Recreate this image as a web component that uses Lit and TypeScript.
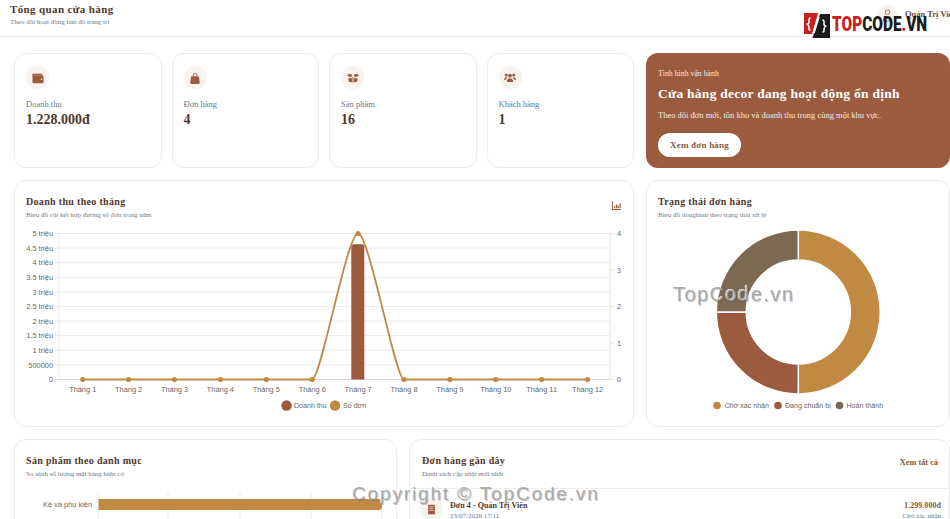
import { LitElement, html, css, svg } from "lit";
import { customElement } from "lit/decorators.js";

const GOLD = "#c08a44";
const BROWN = "#9a5b3e";
const TAUPE = "#7d6852";
const months = Array.from({ length: 12 }, (_, i) => `Tháng ${i + 1}`);
const xAt = (i: number) => 82.7 + i * 45.9;
const Y0 = 379.5;
const YT = 233.5;
const leftTicks = ["0", "500000", "1 triệu", "1.5 triệu", "2 triệu", "2.5 triệu", "3 triệu", "3.5 triệu", "4 triệu", "4.5 triệu", "5 triệu"];

function linePath(): string {
  return (
    `M${xAt(0)} ${Y0} L${xAt(5)} ${Y0} ` +
    `C${xAt(5) + 8.7} ${Y0} ${xAt(6) - 11.2} ${YT} ${xAt(6)} ${YT} ` +
    `C${xAt(6) + 11.2} ${YT} ${xAt(7) - 8.7} ${Y0} ${xAt(7)} ${Y0} ` +
    `L${xAt(11)} ${Y0}`
  );
}

function arc(a0: number, a1: number, R = 82, r = 52, cx = 798.3, cy = 312): string {
  const p = (rad: number, a: number) => {
    const t = ((a - 90) * Math.PI) / 180;
    return `${(cx + rad * Math.cos(t)).toFixed(2)} ${(cy + rad * Math.sin(t)).toFixed(2)}`;
  };
  const large = a1 - a0 > 180 ? 1 : 0;
  return `M${p(R, a0)} A${R} ${R} 0 ${large} 1 ${p(R, a1)} L${p(r, a1)} A${r} ${r} 0 ${large} 0 ${p(r, a0)} Z`;
}

const icons = {
  wallet: svg`<path d="M1.500 1.800h9.700v1.700H2.300v.2h9.500c.4 0 .7.300.7.700v6.800c0 .5-.4.900-.9.900H1.700c-.7 0-1.200-.5-1.200-1.200V2.800c0-.6.4-1 1-1z"/><circle cx="10.200" cy="7.800" r=".8" fill="#f8f3ee"/>`,
  bag: svg`<path d="M4 5V3.500a2.500 2.500 0 0 1 5 0V5H8V3.500a1.500 1.500 0 0 0-3 0V5z"/><path d="M2.300 4.700h8.400l.9 6.700c.1.800-.5 1.600-1.300 1.600H2.700c-.8 0-1.400-.8-1.300-1.600z"/>`,
  boxes: svg`<path d="M0 4 2.200 1.800 6 3 4.300 5.800zM13 4l-2.200-2.200L7 3l1.700 2.800z"/><path d="M1.700 6.300 4.600 7 6 5v6.500l-3.500-.9c-.5-.1-.8-.5-.8-1zM11.300 6.300 8.400 7 7 5v6.500l3.500-.9c.5-.1.800-.5.800-1z"/>`,
  users: svg`<circle cx="6.500" cy="4" r="2"/><circle cx="2.400" cy="3.400" r="1.600"/><circle cx="10.600" cy="3.400" r="1.600"/><path d="M3 10.800c0-2.200 1.400-3.900 3.500-3.900S10 8.600 10 10.800z"/><path d="M0 8.500c0-1.700.9-2.900 2.400-2.900.6 0 1.100.100 1.400.4-.9.700-1.500 1.500-1.600 2.500zM13 8.500c0-1.700-.9-2.900-2.400-2.900-.6 0-1.100.100-1.400.4.900.7 1.500 1.500 1.600 2.500z"/>`,
  doc: svg`<path d="M2.500.8h8v11.400h-8z"/><path d="M4 3.300h5M4 5.500h5M4 7.700h5" stroke="#f8f3ee" stroke-width=".7"/>`,
};

@customElement("app-root")
export class AppRoot extends LitElement {
  static styles = css`
    :host {
      display: block;
      position: relative;
      width: 950px;
      height: 519px;
      overflow: hidden;
      background: #fff;
      font-family: "Liberation Serif", serif;
      color: #4f382c;
    }
    .topbar {
      height: 36px;
      border-bottom: 1px solid #eceaea;
      display: flex;
      align-items: center;
      justify-content: space-between;
      padding-left: 10px;
    }
    .topbar h1 {
      margin: 0;
      font-size: 11px;
      line-height: 14px;
      font-weight: 700;
      letter-spacing: 0.38px;
    }
    .topbar p {
      margin: 2px 0 7px;
      font-size: 7px;
      line-height: 9px;
      color: #6c7a89;
    }
    .user {
      width: 73px;
      flex: none;
      display: flex;
      align-items: center;
      gap: 7px;
      overflow: hidden;
      white-space: nowrap;
      margin-bottom: 6px;
      font-size: 8.5px;
      font-weight: 700;
      color: #5d5149;
    }
    .user .name {
      margin-top: -2px;
    }
    .avatar {
      width: 21px;
      height: 21px;
      flex: none;
      border-radius: 50%;
      background: #f8f3ee;
      display: flex;
      align-items: center;
      justify-content: center;
    }
    main {
      display: flex;
      flex-direction: column;
      gap: 12px;
      padding: 16px 0 0 14px;
      width: 935px;
    }
    .row {
      display: grid;
      gap: 12px;
    }
    .row-a,
    .row-b {
      grid-template-columns: 620px 304px;
    }
    .row-c {
      grid-template-columns: 383px 541px;
    }
    .stats {
      display: grid;
      grid-template-columns: repeat(4, 1fr);
      gap: 10px;
    }
    .card {
      box-sizing: border-box;
      border: 1px solid #ececea;
      border-radius: 12px;
      background: #fff;
    }
    .stat {
      height: 115px;
      padding: 12px 11px;
    }
    .ic {
      width: 23px;
      height: 23px;
      border-radius: 50%;
      background: #f8f3ee;
      display: flex;
      align-items: center;
      justify-content: center;
      flex: none;
    }
    .ic svg {
      fill: #9a5b3e;
    }
    .stat .label {
      margin-top: 10px;
      font-size: 8.5px;
      line-height: 11px;
      color: #6c7a89;
    }
    .stat .value {
      margin-top: 2px;
      font-size: 14px;
      line-height: 16px;
      font-weight: 700;
    }
    .hero {
      box-sizing: border-box;
      height: 115px;
      border-radius: 12px;
      background: #9a5b3e;
      color: #fff;
      padding: 15px 12px;
    }
    .hero .eyebrow {
      font-size: 7.8px;
      line-height: 10px;
      margin-top: 0.5px;
      color: #f5e9e1;
    }
    .hero h2 {
      margin: 7px 0 0;
      font-size: 13.5px;
      line-height: 16px;
      font-weight: 700;
      letter-spacing: 0.27px;
    }
    .hero p {
      margin: 8px 0 0;
      font-size: 8.5px;
      line-height: 11px;
      color: #f5e9e1;
    }
    .btn {
      display: inline-block;
      margin-top: 12px;
      width: 83px;
      height: 24px;
      box-sizing: border-box;
      border-radius: 12px;
      background: #fff;
      color: #8a5a44;
      font-size: 9px;
      line-height: 24px;
      text-align: center;
      font-weight: 700;
      letter-spacing: 0.2px;
    }
    .panel {
      padding: 14px 11px 0;
      overflow: hidden;
    }
    .tall {
      height: 247px;
    }
    .head {
      display: flex;
      justify-content: space-between;
      align-items: flex-start;
      height: 31px;
    }
    .head h3 {
      margin: 0;
      font-size: 10px;
      line-height: 13px;
      font-weight: 700;
      letter-spacing: 0.32px;
    }
    .head p {
      margin: 3px 0 0;
      font-size: 7px;
      line-height: 9px;
      color: #6c7a89;
    }
    .bar-ic {
      margin-top: 6px;
      margin-right: 1px;
      fill: #9a5b3e;
    }
    .chart {
      display: block;
    }
    .chart text {
      font-family: "Liberation Sans", Arial, sans-serif;
      font-size: 7.4px;
      fill: #666;
    }
    .chart text.lg {
      font-size: 7.1px;
    }
    .bottom {
      height: 110px;
    }
    .all {
      font-size: 8.3px;
      font-weight: 700;
      color: #8a5a44;
      margin-top: 4px;
    }
    .recent {
      padding: 14px 0 0;
    }
    .recent .head {
      padding: 0 11px 0 12px;
      height: 34px;
    }
    .order {
      border-top: 1px solid #f0eeec;
      display: flex;
      align-items: flex-start;
      gap: 7px;
      padding: 9px 8px 0 10px;
    }
    .order .info {
      flex: 1;
      margin-top: 1.5px;
    }
    .order b {
      display: block;
      font-size: 8px;
      line-height: 11px;
      letter-spacing: 0.05px;
    }
    .order small {
      display: block;
      margin-top: 1.5px;
      font-size: 7px;
      line-height: 9px;
      color: #6c7a89;
    }
    .order .amt {
      text-align: right;
      margin-top: 1.5px;
    }
    .order .amt b {
      color: #8a5a44;
    }
    .logo {
      position: absolute;
      left: 803px;
      top: 12px;
      display: flex;
      align-items: center;
      gap: 1px;
      font-family: "Roboto", "Liberation Sans", sans-serif;
      font-weight: 900;
      font-size: 19.5px;
      line-height: 26px;
      color: #1b1b1b;
    }
    .logo .word {
      display: inline-block;
      transform: scaleX(0.79);
      transform-origin: left center;
    }
    .logo .r {
      color: #c8201f;
    }
    .mark {
      position: absolute;
      font-family: "Liberation Sans", Arial, sans-serif;
      color: rgba(160, 160, 160, 0.85);
      text-shadow: 1px 1px 0 rgba(60, 60, 60, 0.3), -1px -1px 0 rgba(255, 255, 255, 0.8);
      white-space: nowrap;
    }
    .mark.a {
      left: 673px;
      top: 282px;
      font-size: 20px;
      line-height: 24px;
      letter-spacing: 1.45px;
    }
    .mark.b {
      left: 352px;
      top: 482px;
      font-size: 19px;
      line-height: 23px;
      letter-spacing: 1.85px;
    }
  `;

  private stat(icon: unknown, label: string, value: string) {
    return html`<div class="card stat">
      <div class="ic"><svg width="12" height="12" viewBox="0 0 13 13">${icon}</svg></div>
      <div class="label">${label}</div>
      <div class="value">${value}</div>
    </div>`;
  }

  private mainChart() {
    return html`<svg class="chart" width="600" height="190" viewBox="26 226 600 190">
      ${leftTicks.map((t, i) => {
        const y = Y0 - i * 14.6;
        return svg`<line x1="55" x2="610" y1=${y} y2=${y} stroke=${i === 0 ? "#d9d9d9" : "#ebebeb"} />
          <text x="53" y=${y + 2.7} text-anchor="end">${t}</text>`;
      })}
      <line x1="59" x2="59" y1=${YT} y2=${Y0} stroke="#ebebeb" />
      <line x1="610" x2="610" y1=${YT} y2=${Y0} stroke="#e2e2e2" />
      ${[0, 1, 2, 3, 4].map((t) => {
        const y = Y0 - t * 36.5;
        return svg`<line x1="610" x2="614" y1=${y} y2=${y} stroke="#e2e2e2" />
          <text x="617" y=${y + 2.7}>${t}</text>`;
      })}
      ${months.map((m, i) => svg`<text x=${xAt(i)} y="392" text-anchor="middle">${m}</text>`)}
      <path d="M351.300 379.500V247.300a3 3 0 0 1 3-3h7a3 3 0 0 1 3 3V379.500z" fill=${BROWN} />
      <path d=${linePath()} fill="none" stroke=${GOLD} stroke-width="1.800" />
      ${months.map((_, i) => svg`<circle cx=${xAt(i)} cy=${i === 6 ? YT : Y0} r="2.600" fill=${GOLD} />`)}
      <circle cx="286.500" cy="405.500" r="5.200" fill=${BROWN} />
      <text class="lg" x="294" y="408">Doanh thu</text>
      <circle cx="335" cy="405.500" r="5.200" fill=${GOLD} />
      <text class="lg" x="343" y="408">Số đơn</text>
    </svg>`;
  }

  private donut() {
    return html`<svg class="chart" width="300" height="190" viewBox="658 226 300 190">
      <path d=${arc(0, 180)} fill=${GOLD} stroke="#fff" stroke-width="1.500" />
      <path d=${arc(180, 270)} fill=${BROWN} stroke="#fff" stroke-width="1.500" />
      <path d=${arc(270, 360)} fill=${TAUPE} stroke="#fff" stroke-width="1.500" />
      <circle cx="717" cy="405.500" r="3.800" fill=${GOLD} />
      <text class="lg" x="724.500" y="408">Chờ xác nhận</text>
      <circle cx="778" cy="405.500" r="3.800" fill=${BROWN} />
      <text class="lg" x="785" y="408">Đang chuẩn bị</text>
      <circle cx="839.500" cy="405.500" r="3.800" fill=${TAUPE} />
      <text class="lg" x="846.500" y="408">Hoàn thành</text>
    </svg>`;
  }

  private barChart() {
    return html`<svg class="chart" width="370" height="34" viewBox="26 485 370 34">
      ${[98, 168, 240, 311, 382].map(
        (x) => svg`<line x1=${x} x2=${x} y1="492" y2="519" stroke="#ebebeb" />`
      )}
      <text x="92" y="507" text-anchor="end">Kệ và phụ kiện</text>
      <path d="M98.500 499H379a3 3 0 0 1 3 3v5a3 3 0 0 1-3 3H98.500z" fill=${GOLD} />
    </svg>`;
  }

  render() {
    return html`
      <header class="topbar">
        <div>
          <h1>Tổng quan cửa hàng</h1>
          <p>Theo dõi hoạt động bán đồ trang trí</p>
        </div>
        <div class="user">
          <span class="avatar">
            <svg width="11" height="13" viewBox="0 0 11 13" fill="none" stroke=${BROWN} stroke-width=".8">
              <circle cx="5.500" cy="3.200" r="2.300" />
              <path d="M1.500 12v-1.800c0-1.200.8-2 1.800-2h4.400c1 0 1.800.8 1.800 2V12z" />
            </svg>
          </span>
          <span class="name">Quản Trị Viên</span>
        </div>
      </header>

      <main>
        <section class="row row-a">
          <div class="stats">
            ${this.stat(icons.wallet, "Doanh thu", "1.228.000đ")}
            ${this.stat(icons.bag, "Đơn hàng", "4")}
            ${this.stat(icons.boxes, "Sản phẩm", "16")}
            ${this.stat(icons.users, "Khách hàng", "1")}
          </div>
          <div class="hero">
            <div class="eyebrow">Tình hình vận hành</div>
            <h2>Cửa hàng decor đang hoạt động ổn định</h2>
            <p>Theo dõi đơn mới, tồn kho và doanh thu trong cùng một khu vực.</p>
            <span class="btn">Xem đơn hàng</span>
          </div>
        </section>

        <section class="row row-b">
          <div class="card panel tall">
            <div class="head">
              <div>
                <h3>Doanh thu theo tháng</h3>
                <p>Biểu đồ cột kết hợp đường số đơn trong năm</p>
              </div>
              <svg class="bar-ic" width="9" height="9" viewBox="0 0 9 9">
                <path d="M0 0h.9v8.100H9V9H0z" />
                <path d="M2 5h1.200v2.300H2zM3.900 3.500h1.200v3.800H3.900zM5.700 4.500h1.200v2.800H5.700zM7.500 2.500h1.200v4.800H7.500z" />
              </svg>
            </div>
            ${this.mainChart()}
          </div>
          <div class="card panel tall">
            <div class="head">
              <div>
                <h3>Trạng thái đơn hàng</h3>
                <p>Biểu đồ doughnut theo trạng thái xử lý</p>
              </div>
            </div>
            ${this.donut()}
          </div>
        </section>

        <section class="row row-c">
          <div class="card panel bottom">
            <div class="head">
              <div>
                <h3>Sản phẩm theo danh mục</h3>
                <p>So sánh số lượng mặt hàng hiện có</p>
              </div>
            </div>
            ${this.barChart()}
          </div>
          <div class="card panel bottom recent">
            <div class="head">
              <div>
                <h3>Đơn hàng gần đây</h3>
                <p>Danh sách cập nhật mới nhất</p>
              </div>
              <span class="all">Xem tất cả</span>
            </div>
            <div class="order">
              <div class="ic"><svg width="11" height="11" viewBox="0 0 13 13">${icons.doc}</svg></div>
              <div class="info">
                <b>Đơn 4 - Quản Trị Viên</b>
                <small>23/07/2026 17:11</small>
              </div>
              <div class="amt">
                <b>1.299.000đ</b>
                <small>Chờ xác nhận</small>
              </div>
            </div>
          </div>
        </section>
      </main>

      <div class="logo">
        <svg width="28" height="26" viewBox="0 0 28 26">
          <path d="M1 1h14l-6 21H1z" fill="#c8201f" />
          <path d="M17 2h10v24H9.500z" fill="#1b1b1b" />
          <path d="M7.500 6C5.500 6 6 8 6 10s-1.500 2-2 2 2 1 2 3-.5 3 1.500 3" fill="none" stroke="#fff" stroke-width="1.500" />
          <path d="M19.500 8c2 0 1.500 2 1.500 4s1.500 2 2 2-2 1-2 3 .5 3-1.500 3" fill="none" stroke="#fff" stroke-width="1.500" />
          <path d="M16 5 11 21" stroke="#fff" stroke-width="1.500" />
        </svg>
        <span class="word"><span class="r">TOP</span>CODE<span class="r">.</span>VN</span>
      </div>
      <div class="mark a">TopCode.vn</div>
      <div class="mark b">Copyright © TopCode.vn</div>
    `;
  }
}
